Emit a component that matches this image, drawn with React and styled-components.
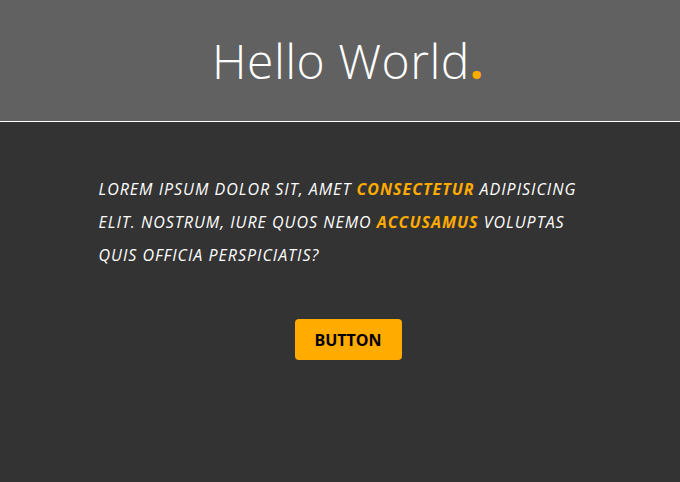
import React from "react";
import styled, { createGlobalStyle } from "styled-components";

const Global = createGlobalStyle`
  html, body { margin: 0; padding: 0; background: #333333; }
  body { font-family: "Open Sans", "Liberation Sans", sans-serif; }
`;

const Page = styled.div`
  min-height: 482px;
  background: #333333;
`;

const Header = styled.header`
  height: 121px;
  background: #616161;
  border-bottom: 1px solid #ffffff;
  display: flex;
  align-items: center;
  justify-content: center;
  padding-left: 16px;
  box-sizing: content-box;
`;

const Title = styled.h1`
  margin: 0;
  font-weight: 300;
  font-size: 48px;
  color: #ffffff;
  letter-spacing: 0.5px;
  line-height: 1;
`;

const Dot = styled.span`
  color: #ffab00;
  font-weight: 700;
`;

const Main = styled.main`
  display: flex;
  flex-direction: column;
  align-items: center;
  padding: 51px 0 0 16px;
`;

const Text = styled.p`
  margin: 0;
  width: 500px;
  padding-left: 1px;
  font-style: italic;
  text-transform: uppercase;
  font-size: 16px;
  line-height: 33px;
  letter-spacing: 1px;
  color: #ffffff;
`;

const Em = styled.strong`
  color: #ffab00;
  font-weight: 700;
`;

const Button = styled.button`
  margin-top: 47px;
  width: 107px;
  height: 41px;
  border: none;
  border-radius: 4px;
  background: #ffab00;
  color: #000000;
  font-family: "Open Sans", "Liberation Sans", sans-serif;
  font-weight: 700;
  font-size: 16px;
  letter-spacing: 0;
  padding: 0;
  cursor: pointer;
`;

export default function App() {
  return (
    <Page>
      <Global />
      <Header>
        <Title>
          Hello World<Dot>.</Dot>
        </Title>
      </Header>
      <Main>
        <Text>
          Lorem ipsum dolor sit, amet <Em>consectetur</Em> adipisicing elit.
          Nostrum, iure quos nemo <Em>accusamus</Em> voluptas quis officia
          perspiciatis?
        </Text>
        <Button>BUTTON</Button>
      </Main>
    </Page>
  );
}
